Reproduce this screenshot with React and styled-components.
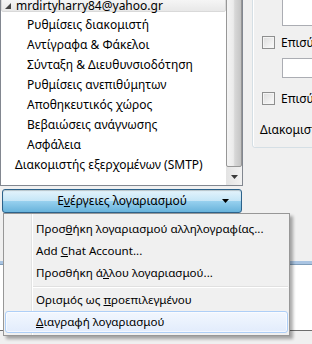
import React from 'react';
import styled, { createGlobalStyle } from 'styled-components';

const GlobalStyle = createGlobalStyle`
    html, body {
        margin: 0;
        padding: 0;
        background: #f0f0f0;
    }
    body {
        font-family: "Noto Sans", "Liberation Sans", sans-serif;
        font-size: 12px;
        color: #000;
    }
    * { box-sizing: border-box; }
`;

const Page = styled.div`
    position: relative;
    width: 312px;
    height: 344px;
    overflow: hidden;
    background: #f0f0f0;
    display: flex;
    flex-direction: column;
`;

const TopArea = styled.div`
    display: grid;
    grid-template-columns: 243px 1fr;
    height: 213px;
    flex: none;
`;

const LeftCol = styled.div`
    display: flex;
    flex-direction: column;
`;

const TreeBox = styled.div`
    margin-top: -1px;
    height: 187px;
    border: 1px solid #828790;
    background: #fff;
    display: grid;
    grid-template-columns: 1fr 16px;
    overflow: hidden;
`;

const TreeList = styled.div`
    display: flex;
    flex-direction: column;
    white-space: nowrap;
`;

const HeaderRow = styled.div`
    margin-top: -5px;
    height: 17px;
    padding-top: 4px;
    padding-left: 3px;
    line-height: 12px;
    border: 1px solid #d9d9d9;
    border-radius: 2px;
    background: linear-gradient(#fafafa, #e8e8e8);
    display: flex;
    gap: 5px;
`;

const Expander = styled.svg`
    width: 6px;
    height: 6px;
    margin-top: 3px;
    flex: none;
`;

const Items = styled.div`
    margin-top: 3px;
    display: flex;
    flex-direction: column;
`;

const Item = styled.div`
    height: 20px;
    line-height: 20px;
    padding-left: ${p => p.$top ? 14 : 26}px;
`;

const Scrollbar = styled.div`
    display: flex;
    flex-direction: column;
    background: linear-gradient(to right, #e3e3e3, #f2f2f2);
`;

const Thumb = styled.div`
    flex: 1;
    margin: -4px 0 1px;
    border: 1px solid #979797;
    border-radius: 2px;
    background: linear-gradient(to right, #f4f4f4, #ebebeb 45%, #d8d8d8 55%, #c4c4c4);
`;

const ArrowBtn = styled.div`
    height: 17px;
    display: flex;
    align-items: center;
    justify-content: center;
`;

const ActionButton = styled.div`
    margin: 3px 0 0 2px;
    width: 240px;
    height: 24px;
    border: 1px solid #2c628b;
    border-radius: 3px;
    background: linear-gradient(#e5f4fc 0%, #c4e5f6 50%, #98d1ef 50%, #68b3db 100%);
    box-shadow: inset 0 1px 1px rgba(0, 0, 0, 0.2);
    display: flex;
    align-items: center;
    justify-content: center;
    position: relative;
    line-height: 20px;
`;

const DropArrow = styled.svg`
    position: absolute;
    right: 12px;
    top: 9px;
`;

const RightCol = styled.div`
    padding-left: 9px;
`;

const GroupBox = styled.div`
    margin-top: -4px;
    margin-right: -10px;
    height: 152px;
    border: 1px solid #d5dfe5;
    border-radius: 3px;
    box-shadow: inset 1px 0 0 #fff;
    display: flex;
    flex-direction: column;
    white-space: nowrap;
`;

const TextBox = styled.div`
    margin: ${p => p.$first ? '0' : '9px'} 0 0 29px;
    height: ${p => p.$first ? 29 : 20}px;
    border: 1px solid #abadb3;
    border-right: none;
    background: #fff;
`;

const CheckRow = styled.div`
    margin-top: ${p => p.$gap}px;
    padding-left: 9px;
    height: 13px;
    display: flex;
    align-items: center;
    gap: 6px;
    line-height: 13px;
`;

const CheckBox = styled.span`
    width: 13px;
    height: 13px;
    flex: none;
    border: 1px solid #8e8f8f;
    background: linear-gradient(135deg, #dcdcdc, #fbfbfb);
    box-shadow: inset 0 0 0 1px #f4f4f4;
`;

const FieldLabel = styled.div`
    margin-top: 17px;
    padding-left: 7px;
    line-height: 16px;
`;

const Band = styled.div`
    height: 48px;
    flex: none;
`;

const BehindPanel = styled.div`
    height: 70px;
    flex: none;
    background: #fff;
    border-top: 3px solid #a9c4e2;
    border-bottom: 1px solid #6d6d6d;
    box-shadow: inset 0 1px 0 #7f9db9;
`;

const Menu = styled.div`
    position: absolute;
    left: 3px;
    top: 213px;
    width: 287px;
    padding: 4px 0 2px;
    border: 1px solid #979797;
    background: linear-gradient(to right, #f1f1f1 27px, #e2e3e3 27px, #e2e3e3 28px, #fff 28px, #fff 29px, #f0f0f0 29px);
    box-shadow: 3px 3px 3px rgba(0, 0, 0, 0.32);
    white-space: nowrap;
    font-size: 11.6px;
`;

const MenuItem = styled.div`
    margin: 0 1px;
    height: 22px;
    line-height: 20px;
    padding-left: 30px;
    border: 1px solid ${p => p.$active ? '#aecff7' : 'transparent'};
    border-radius: 3px;
    background: ${p => p.$active ? 'linear-gradient(#f2f7fe, #e2ecfc)' : 'transparent'};
    box-shadow: ${p => p.$active ? 'inset 0 0 0 1px rgba(255,255,255,0.6)' : 'none'};
`;

const Separator = styled.div`
    margin: 2px 1px 1px 29px;
    height: 2px;
    border-top: 1px solid #e0e0e0;
    border-bottom: 1px solid #fff;
`;

const Mn = styled.span`
    text-decoration: underline;
`;

const subItems = [
    'Ρυθμίσεις διακομιστή',
    'Αντίγραφα & Φάκελοι',
    'Σύνταξη & Διευθυνσιοδότηση',
    'Ρυθμίσεις ανεπιθύμητων',
    'Αποθηκευτικός χώρος',
    'Βεβαιώσεις ανάγνωσης',
    'Ασφάλεια',
];

export default function App() {
    return (
        <>
            <GlobalStyle />
            <Page>
                <TopArea>
                    <LeftCol>
                        <TreeBox>
                            <TreeList>
                                <HeaderRow>
                                    <Expander viewBox="0 0 6 6">
                                        <path d="M6 0 L6 6 L0 6 Z" fill="#464646" />
                                    </Expander>
                                    <span>mrdirtyharry84@yahoo.gr</span>
                                </HeaderRow>
                                <Items>
                                    {subItems.map(t => <Item key={t}>{t}</Item>)}
                                    <Item $top>Διακομιστής εξερχομένων (SMTP)</Item>
                                </Items>
                            </TreeList>
                            <Scrollbar>
                                <Thumb />
                                <ArrowBtn>
                                    <svg width="7" height="4" viewBox="0 0 7 4">
                                        <path d="M0 0 H7 L3.5 4 Z" fill="#3a3a3a" />
                                    </svg>
                                </ArrowBtn>
                            </Scrollbar>
                        </TreeBox>
                        <ActionButton>
                            <span>Ε<Mn>ν</Mn>έργειες λογαριασμού</span>
                            <DropArrow width="7" height="4" viewBox="0 0 7 4">
                                <path d="M0 0 H7 L3.5 4 Z" fill="#000" />
                            </DropArrow>
                        </ActionButton>
                    </LeftCol>
                    <RightCol>
                        <GroupBox>
                            <TextBox $first />
                            <CheckRow $gap={10}>
                                <CheckBox />
                                <span>Επισύναψη της υπογραφής</span>
                            </CheckRow>
                            <TextBox />
                            <CheckRow $gap={14}>
                                <CheckBox />
                                <span>Επισύναψη της κάρτας vCard</span>
                            </CheckRow>
                            <FieldLabel>Διακομιστής εξερχομένων (SMTP):</FieldLabel>
                        </GroupBox>
                    </RightCol>
                </TopArea>
                <Band />
                <BehindPanel />
                <Menu>
                    <MenuItem>Προσ<Mn>θ</Mn>ήκη λογαριασμού αλληλογραφίας...</MenuItem>
                    <MenuItem>Add <Mn>C</Mn>hat Account...</MenuItem>
                    <MenuItem>Προσθήκη ά<Mn>λ</Mn>λου λογαριασμού...</MenuItem>
                    <Separator />
                    <MenuItem>Ορισμός ως <Mn>π</Mn>ροεπιλεγμένου</MenuItem>
                    <MenuItem $active><Mn>Δ</Mn>ιαγραφή λογαριασμού</MenuItem>
                </Menu>
            </Page>
        </>
    );
}
